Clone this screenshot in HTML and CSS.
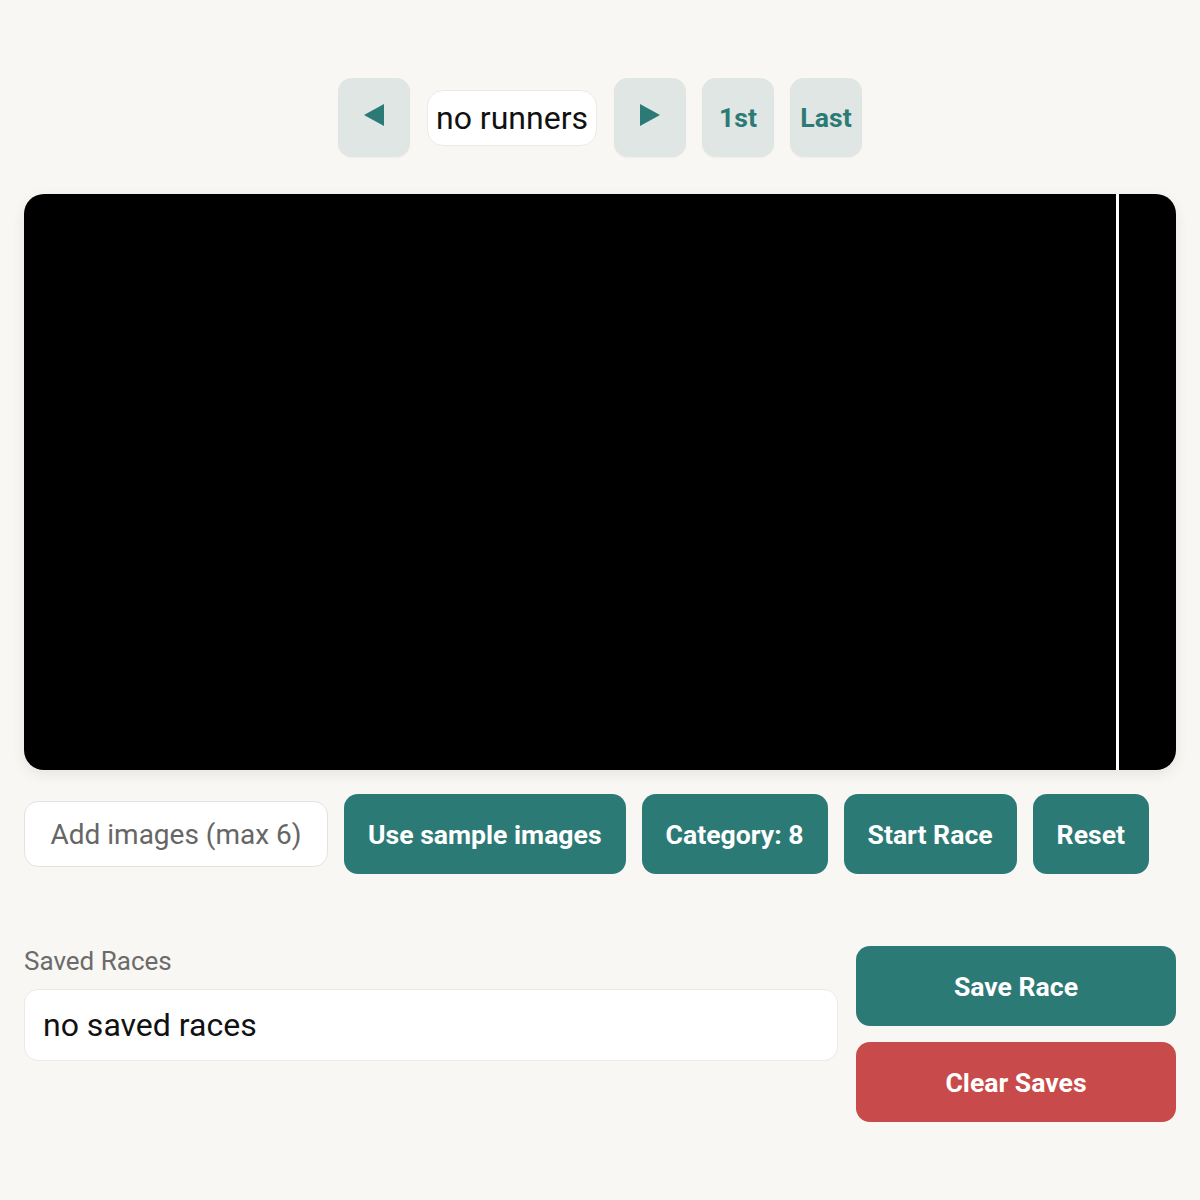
FILE: index.html
```html
<!DOCTYPE html>
<html lang="en">
<head>
<meta charset="utf-8">
<title>Image Race</title>
<link rel="stylesheet" href="styles.css">
</head>
<body>
<main class="app">
  <nav class="runner-nav">
    <button class="nav-btn" aria-label="Previous runner">
      <svg width="22" height="24" viewBox="0 0 22 24"><polygon points="21,1 21,23 1,12" fill="#2c7a76"/></svg>
    </button>
    <span class="runner-label">no runners</span>
    <button class="nav-btn" aria-label="Next runner">
      <svg width="22" height="24" viewBox="0 0 22 24"><polygon points="1,1 1,23 21,12" fill="#2c7a76"/></svg>
    </button>
    <button class="nav-btn nav-text">1st</button>
    <button class="nav-btn nav-text">Last</button>
  </nav>

  <section class="track">
    <div class="finish-line"></div>
  </section>

  <div class="controls">
    <label class="file-input">Add images (max 6)</label>
    <button class="btn">Use sample images</button>
    <button class="btn">Category: 8</button>
    <button class="btn">Start Race</button>
    <button class="btn">Reset</button>
  </div>

  <section class="saves">
    <div class="saves-list">
      <div class="saves-label">Saved Races</div>
      <div class="saves-select">no saved races</div>
    </div>
    <div class="saves-actions">
      <button class="btn btn-wide">Save Race</button>
      <button class="btn btn-wide btn-danger">Clear Saves</button>
    </div>
  </section>
</main>
</body>
</html>
```

FILE: styles.css
```css
* { box-sizing: border-box; }

html, body {
  margin: 0;
  background: #f8f7f3;
  font-family: Roboto, "Noto Sans", Arial, sans-serif;
}

.app {
  padding: 78px 24px 0;
}

button {
  font-family: inherit;
  border: 0;
  cursor: pointer;
}

/* Runner navigation */
.runner-nav {
  display: flex;
  justify-content: center;
  align-items: center;
  gap: 16px;
}

.nav-btn {
  width: 72px;
  height: 79px;
  border-radius: 14px;
  background: #dfe6e3;
  display: flex;
  align-items: center;
  justify-content: center;
  padding: 0 0 6px;
  box-shadow: 0 1px 2px rgba(0,0,0,0.04);
}

.nav-text {
  color: #2c7a76;
  font-size: 26.6px;
  font-weight: 700;
  padding: 0;
}

.runner-label {
  height: 56px;
  padding: 0 8px;
  background: #fff;
  border: 1px solid #eceae5;
  border-radius: 16px;
  display: flex;
  align-items: center;
  font-size: 32px;
  color: #111;
  margin: 0 1px;
}

/* Race track */
.track {
  position: relative;
  margin-top: 37px;
  height: 576px;
  background: #000;
  border-radius: 20px;
  box-shadow: 0 4px 14px rgba(0,0,0,0.08);
  overflow: hidden;
}

.finish-line {
  position: absolute;
  top: 0;
  bottom: 0;
  left: 1092px;
  width: 3px;
  background: #fff;
}

/* Controls */
.controls {
  margin-top: 24px;
  display: flex;
  align-items: center;
  gap: 16px;
}

.file-input {
  width: 304px;
  height: 66px;
  display: flex;
  align-items: center;
  justify-content: center;
  background: #fff;
  border: 1px solid #e3e2de;
  border-radius: 14px;
  color: #666;
  font-size: 28px;
}

.btn {
  height: 80px;
  padding: 0 24px;
  border-radius: 14px;
  background: #2c7a76;
  color: #fff;
  font-size: 26.6px;
  font-weight: 700;
}

/* Saved races */
.saves {
  margin-top: 72px;
  display: flex;
  gap: 18px;
}

.saves-list {
  flex: 1;
}

.saves-label {
  font-size: 26px;
  color: #6b6b6b;
  line-height: 30px;
}

.saves-select {
  margin-top: 13px;
  height: 72px;
  background: #fff;
  border: 1px solid #eceae5;
  border-radius: 14px;
  display: flex;
  align-items: center;
  padding-left: 18px;
  font-size: 32px;
  color: #111;
}

.saves-actions {
  width: 320px;
  display: flex;
  flex-direction: column;
  gap: 16px;
}

.btn-wide {
  width: 100%;
}

.btn-danger {
  background: #c94a4a;
}
```
